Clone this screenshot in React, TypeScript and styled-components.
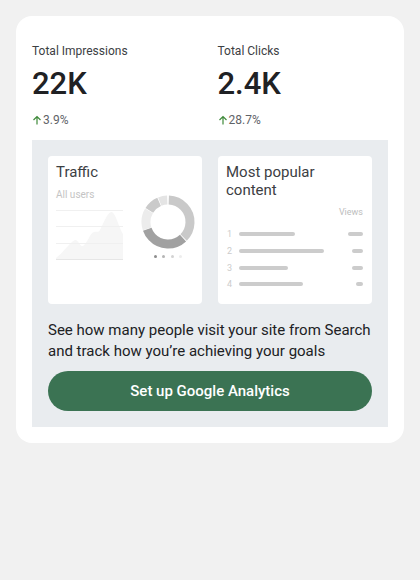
import React from 'react';
import styled, { createGlobalStyle } from 'styled-components';

const GlobalStyle = createGlobalStyle`
    body {
        margin: 0;
        background: #f1f1f1;
        font-family: Roboto, "Liberation Sans", sans-serif;
        color: #202124;
    }
`;

interface Stat {
    label: string;
    value: string;
    change: string;
}

const stats: Stat[] = [
    { label: 'Total Impressions', value: '22K', change: '3.9%' },
    { label: 'Total Clicks', value: '2.4K', change: '28.7%' },
];

const popular = [
    { bar: 56, views: 15 },
    { bar: 85, views: 11 },
    { bar: 49, views: 11 },
    { bar: 64, views: 7 },
];

// donut segments, degrees clockwise from 12 o'clock
const segments = [
    { from: 2, to: 134, color: '#c9c9c9' },
    { from: 137, to: 250, color: '#a1a1a1' },
    { from: 252, to: 300, color: '#ececec' },
    { from: 302, to: 336, color: '#cacaca' },
    { from: 338, to: 358, color: '#e4e4e4' },
];

const dotColors = ['#8d8d8d', '#b5b5b5', '#d3d3d3', '#ededed'];

function Donut() {
    const r = 22;
    const c = 2 * Math.PI * r;
    return (
        <svg width="54" height="54" viewBox="0 0 54 54">
            {segments.map((s) => {
                const len = ((s.to - s.from) / 360) * c;
                return (
                    <circle
                        key={s.from}
                        cx="27"
                        cy="27"
                        r={r}
                        fill="none"
                        stroke={s.color}
                        strokeWidth="9"
                        strokeDasharray={`${len} ${c}`}
                        transform={`rotate(${s.from - 90} 27 27)`}
                    />
                );
            })}
        </svg>
    );
}

function AreaChart() {
    return (
        <svg width="68" height="56" viewBox="0 0 68 56">
            <path
                d="M0 52 C8 46 14 36 19 34 C22 33 24 41 27 40 C31 38 34 27 38 26 C41 25 42 27 44 24 C48 16 52 5 56 6 C60 8 63 22 67 28 L67 53 L0 53 Z"
                fill="#f6f6f6"
            />
            {[4, 20, 37].map((y) => (
                <line key={y} x1="0" x2="67" y1={y + 0.5} y2={y + 0.5} stroke="#f0f0f0" strokeWidth="1" />
            ))}
            <line x1="0" x2="67" y1="53.5" y2="53.5" stroke="#e6e6e6" strokeWidth="1" />
        </svg>
    );
}

export default function App() {
    return (
        <>
            <GlobalStyle />
            <Page>
                <Card>
                    <Stats>
                        {stats.map((s) => (
                            <StatBlock key={s.label}>
                                <StatLabel>{s.label}</StatLabel>
                                <StatValue>{s.value}</StatValue>
                                <Change>
                                    <Arrow viewBox="0 0 10 10">
                                        <path d="M5 9.5V1.5M1.5 5L5 1.5L8.5 5" fill="none" stroke="#3f8a3a" strokeWidth="1.2" />
                                    </Arrow>
                                    {s.change}
                                </Change>
                            </StatBlock>
                        ))}
                    </Stats>
                    <Promo>
                        <Previews>
                            <Preview>
                                <PreviewTitle>Traffic</PreviewTitle>
                                <TrafficBody>
                                    <div>
                                        <Muted>All users</Muted>
                                        <ChartWrap>
                                            <AreaChart />
                                        </ChartWrap>
                                    </div>
                                    <DonutCol>
                                        <Donut />
                                        <Dots>
                                            {dotColors.map((c) => (
                                                <Dot key={c} $color={c} />
                                            ))}
                                        </Dots>
                                    </DonutCol>
                                </TrafficBody>
                            </Preview>
                            <Preview>
                                <PreviewTitle>Most popular content</PreviewTitle>
                                <ViewsHead>Views</ViewsHead>
                                <RowList>
                                    {popular.map((p, i) => (
                                        <Row key={i}>
                                            <RowNum>{i + 1}</RowNum>
                                            <Bar style={{ width: p.bar }} />
                                            <Bar style={{ width: p.views, marginLeft: 'auto' }} />
                                        </Row>
                                    ))}
                                </RowList>
                            </Preview>
                        </Previews>
                        <PromoText>See how many people visit your site from Search and track how you’re achieving your goals</PromoText>
                        <SetupButton>Set up Google Analytics</SetupButton>
                    </Promo>
                </Card>
            </Page>
        </>
    );
}

const Page = styled.div`
    padding: 16px;
`;

const Card = styled.div`
    background: #ffffff;
    border-radius: 16px;
    padding: 27px 16px 16px;
`;

const Stats = styled.div`
    display: grid;
    grid-template-columns: 1fr 1fr;
    column-gap: 15px;
`;

const StatBlock = styled.div`
    display: flex;
    flex-direction: column;
`;

const StatLabel = styled.div`
    font-size: 12px;
    line-height: 16px;
    color: #3c4043;
`;

const StatValue = styled.div`
    font-size: 31px;
    line-height: 36px;
    margin-top: 7px;
    font-weight: 500;
    color: #202124;
`;

const Change = styled.div`
    display: flex;
    align-items: center;
    gap: 1px;
    margin-top: 10px;
    font-size: 12px;
    line-height: 16px;
    color: #5f6368;
`;

const Arrow = styled.svg`
    width: 10px;
    height: 10px;
`;

const Promo = styled.div`
    margin-top: 12px;
    background: #e9ecef;
    padding: 16px;
`;

const Previews = styled.div`
    display: grid;
    grid-template-columns: 1fr 1fr;
    gap: 16px;
`;

const Preview = styled.div`
    background: #ffffff;
    border-radius: 4px;
    height: 148px;
    box-sizing: border-box;
    padding: 7px 9px 8px 8px;
    display: flex;
    flex-direction: column;
`;

const PreviewTitle = styled.div`
    font-size: 15px;
    line-height: 18px;
    color: #3c4043;
`;

const TrafficBody = styled.div`
    display: flex;
    justify-content: space-between;
    margin-top: 8px;
`;

const Muted = styled.div`
    font-size: 10px;
    line-height: 12px;
    color: #c4c4c4;
`;

const ChartWrap = styled.div`
    margin-top: 5px;
    line-height: 0;
`;

const DonutCol = styled.div`
    display: flex;
    flex-direction: column;
    align-items: center;
    margin-top: 6px;
    margin-right: -2px;
`;

const Dots = styled.div`
    display: flex;
    gap: 5.5px;
    margin-top: 6px;
`;

const Dot = styled.span<{ $color: string }>`
    width: 3px;
    height: 3px;
    border-radius: 50%;
    background: ${(p) => p.$color};
`;

const ViewsHead = styled.div`
    margin-top: 7px;
    text-align: right;
    font-size: 9px;
    line-height: 12px;
    color: #bdbdbd;
`;

const RowList = styled.div`
    margin-top: 8px;
    display: flex;
    flex-direction: column;
`;

const Row = styled.div`
    display: flex;
    align-items: center;
    height: 16.7px;
`;

const RowNum = styled.span`
    width: 12px;
    font-size: 9px;
    color: #cccccc;
    padding-left: 1px;
`;

const Bar = styled.span`
    height: 4px;
    border-radius: 2px;
    background: #cccccc;
`;

const PromoText = styled.p`
    margin: 16px 0 0;
    font-size: 15px;
    line-height: 21px;
    color: #202124;
`;

const SetupButton = styled.button`
    display: block;
    width: 100%;
    height: 40px;
    margin-top: 9px;
    border: none;
    border-radius: 20px;
    background: #3b7353;
    color: #ffffff;
    font-family: Roboto, "Liberation Sans", sans-serif;
    font-size: 15px;
    font-weight: 500;
    cursor: pointer;
`;
